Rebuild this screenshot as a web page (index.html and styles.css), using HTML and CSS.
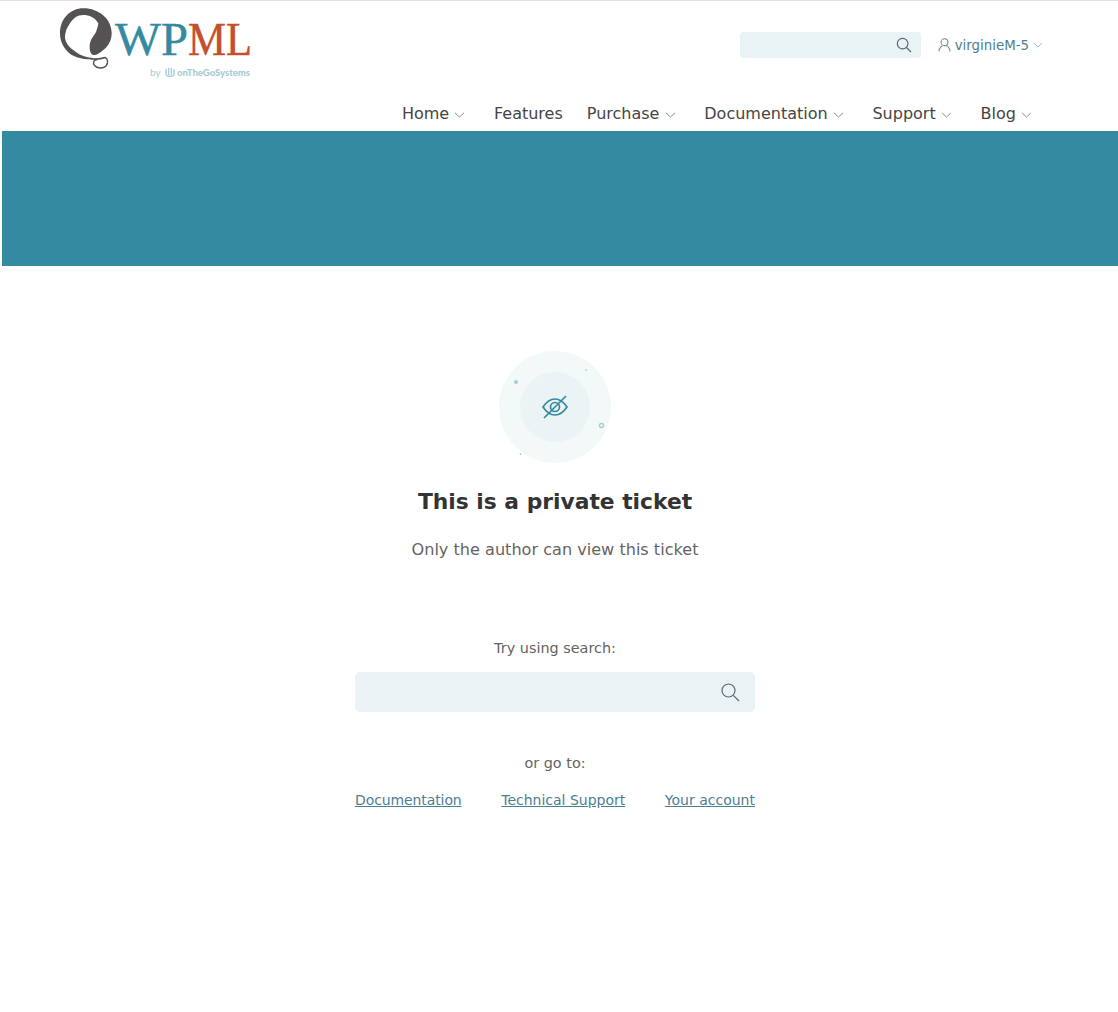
FILE: index.html
```html
<!DOCTYPE html>
<html lang="en">
<head>
    <meta charset="UTF-8">
    <meta name="viewport" content="width=device-width, initial-scale=1.0">
    <title>This is a private ticket - WPML</title>
    <link rel="stylesheet" href="styles.css">
</head>
<body>
    <header class="site-header">
        <div class="header-top">
            <a class="logo" href="#">
                <svg width="200" height="72" viewBox="0 0 200 72">
                    <path d="M23.300 .3 C39 .3 51.700 11 51.700 25.300 C51.700 33 47.500 39 43.300 42 C40 45 36 47.500 33.300 47 C30 46.500 29 40 30 35.300 C31 30 35.500 26.500 36.700 22 C38 18 38.500 16 38.300 15.300 C35 9.500 29 7 23.300 7 C17.500 7 13 10.500 10 15.300 C7 19.500 5 24 5 28.700 C5 34 8.500 38.500 13.300 42 C18 46 24 49.500 33.300 50 L33.300 51.300 C22 51.500 13 49.500 7 43 C2.500 38 0 32 0 25.300 C0 11 10 .3 23.300 .3 Z" fill="#565254"/>
                    <path d="M30 50.500 C36 51.500 41 51 45 49.500 C48 50.500 48.500 55 46 58 C43 61 37 60.500 34.500 57.500 C32.500 55 33.500 51.500 37.500 51.500" fill="none" stroke="#565254" stroke-width="1.400"/>
                    <text class="logo-word logo-wp" x="55" y="47" textLength="73" lengthAdjust="spacingAndGlyphs">WP</text>
                    <text class="logo-word logo-ml" x="128" y="47" textLength="64" lengthAdjust="spacingAndGlyphs">ML</text>
                    <text class="logo-by" x="90" y="68">by</text>
                    <path d="M106 61 V66 C106 69 114 69 114 66 V61 M108.700 60 V67 M111.300 60 V67" fill="none" stroke="#a5cdd7" stroke-width="1.300"/>
                    <text class="logo-otgs" x="117" y="68">onTheGoSystems</text>
                </svg>
            </a>
            <div class="header-tools">
                <div class="search-small">
                    <svg class="search-icon" width="16" height="16" viewBox="0 0 16 16"><circle cx="6.600" cy="6.600" r="5.300"/><path d="M10.500 10.500 L15 15"/></svg>
                </div>
                <a class="user-link" href="#">
                    <svg class="user-icon" width="13" height="14" viewBox="0 0 13 14"><circle cx="6.500" cy="4.200" r="3.400"/><path d="M1 13.500 C1 10.500 3 8.600 4.600 7.600 M12 13.500 C12 10.500 10 8.600 8.400 7.600"/></svg>
                    virginieM-5
                    <svg class="chevron chevron-light" width="10" height="6" viewBox="0 0 10 6"><path d="M1 1 L5 5 L9 1"/></svg>
                </a>
            </div>
        </div>
        <nav class="main-nav">
            <a href="#">Home <svg class="chevron" width="11" height="6" viewBox="0 0 11 6"><path d="M1 .8 L5.500 5 L10 .8"/></svg></a>
            <a href="#">Features</a>
            <a href="#">Purchase <svg class="chevron" width="11" height="6" viewBox="0 0 11 6"><path d="M1 .8 L5.500 5 L10 .8"/></svg></a>
            <a href="#">Documentation <svg class="chevron" width="11" height="6" viewBox="0 0 11 6"><path d="M1 .8 L5.500 5 L10 .8"/></svg></a>
            <a href="#">Support <svg class="chevron" width="11" height="6" viewBox="0 0 11 6"><path d="M1 .8 L5.500 5 L10 .8"/></svg></a>
            <a href="#">Blog <svg class="chevron" width="11" height="6" viewBox="0 0 11 6"><path d="M1 .8 L5.500 5 L10 .8"/></svg></a>
        </nav>
    </header>

    <div class="banner"></div>

    <main class="private-notice">
        <svg class="notice-art" width="112" height="112" viewBox="0 0 112 112">
            <circle cx="56" cy="56" r="56" fill="#f3f8f9"/>
            <circle cx="56" cy="56" r="35" fill="#ebf3f5"/>
            <circle cx="17" cy="31" r="2" fill="#a5cdd7"/>
            <circle cx="87" cy="19" r=".8" fill="#8fb5c0"/>
            <circle cx="102.500" cy="74.500" r="2" fill="none" stroke="#a5cdd7" stroke-width="1.300"/>
            <circle cx="21.500" cy="103" r=".8" fill="#8fb5c0"/>
            <g fill="none" stroke="#348aa1" stroke-width="1.700">
                <path d="M44 56 C48 50 52 48 56 48 C60 48 64 50 68 56 C64 62 60 64 56 64 C52 64 48 62 44 56 Z"/>
                <circle cx="56" cy="56" r="4.500"/>
                <path d="M45 67 L67 45"/>
            </g>
        </svg>
        <h1>This is a private ticket</h1>
        <p class="notice-text">Only the author can view this ticket</p>
        <p class="try-label">Try using search:</p>
        <div class="search-large">
            <svg class="search-icon" width="19" height="19" viewBox="0 0 19 19"><circle cx="7.500" cy="7.500" r="6.500"/><path d="M12.300 12.300 L18 18"/></svg>
        </div>
        <p class="goto-label">or go to:</p>
        <div class="goto-links">
            <a href="#">Documentation</a>
            <a href="#">Technical Support</a>
            <a href="#">Your account</a>
        </div>
    </main>
</body>
</html>
```

FILE: styles.css
```css
body {
    font-family: "DejaVu Sans", Verdana, sans-serif;
    background-color: #fff;
    color: #666363;
    margin: 0;
    border-top: 1px solid #e3e3e3;
}

a {
    color: inherit;
    text-decoration: none;
}

.site-header {
    padding: 0 75px 0 60px;
}

.header-top {
    display: flex;
    justify-content: space-between;
    height: 87px;
    padding-top: 7px;
    box-sizing: border-box;
}

.logo {
    display: block;
    height: 72px;
}

.logo-word {
    font-family: "Liberation Serif", serif;
    font-size: 47px;
    stroke-width: .4px;
}

.logo-wp {
    fill: #348aa1;
    stroke: #348aa1;
}

.logo-ml {
    fill: #c2502a;
    stroke: #c2502a;
}

.logo-by {
    font-family: Lato, sans-serif;
    font-size: 10px;
    fill: #a5cdd7;
}

.logo-otgs {
    font-family: Lato, sans-serif;
    font-size: 9.500px;
    font-weight: 900;
    fill: #a5cdd7;
}

.header-tools {
    display: flex;
    align-items: center;
    gap: 17px;
    height: 26px;
    margin-top: 24px;
}

.search-small {
    display: flex;
    align-items: center;
    justify-content: flex-end;
    width: 181px;
    height: 26px;
    padding-right: 9px;
    box-sizing: border-box;
    background: #e9f2f5;
    border-radius: 4px;
}

.search-icon {
    fill: none;
    stroke: #5e6a6e;
    stroke-width: 1.200;
}

.user-link {
    display: flex;
    align-items: center;
    gap: 4px;
    font-size: 13.360px;
    color: #4a7f93;
}

.user-icon {
    fill: none;
    stroke: #7b8a90;
    stroke-width: 1.100;
}

.chevron {
    fill: none;
    stroke: #8a8a8a;
    stroke-width: 1;
    vertical-align: 1px;
}

.main-nav .chevron {
    margin-right: 4.750px;
}

.chevron-light {
    stroke: #a9bcc3;
}

.main-nav {
    display: flex;
    justify-content: flex-end;
    gap: 24px;
    height: 43px;
    padding: 16px 6.250px 0 0;
    box-sizing: border-box;
    font-size: 16px;
    line-height: 19px;
    color: #464444;
}

.banner {
    height: 135px;
    margin-left: 2px;
    background: #348aa1;
}

.private-notice {
    display: flex;
    flex-direction: column;
    align-items: center;
    width: 400px;
    margin-left: 355px;
    padding-top: 85px;
}

.notice-art {
    display: block;
}

h1 {
    margin: 25px 0 0;
    font-size: 21.800px;
    line-height: 28px;
    font-weight: 700;
    color: #333;
}

.notice-text {
    margin: 24px 0 0;
    font-size: 16.100px;
    line-height: 20px;
}

.try-label {
    margin: 79px 0 0;
    font-size: 14.400px;
    line-height: 18px;
}

.search-large {
    display: flex;
    align-items: center;
    justify-content: flex-end;
    width: 100%;
    height: 40px;
    margin-top: 15px;
    padding-right: 15px;
    box-sizing: border-box;
    background: #ebf2f5;
    border-radius: 5px;
}

.goto-label {
    margin: 42px 0 0;
    font-size: 14.400px;
    line-height: 18px;
}

.goto-links {
    display: flex;
    justify-content: space-between;
    width: 100%;
    margin-top: 19px;
    font-size: 14px;
    line-height: 18px;
}

.goto-links a {
    color: #4a7f93;
    text-decoration: underline;
}

.goto-links a:first-child {
    letter-spacing: -.1px;
}
```
